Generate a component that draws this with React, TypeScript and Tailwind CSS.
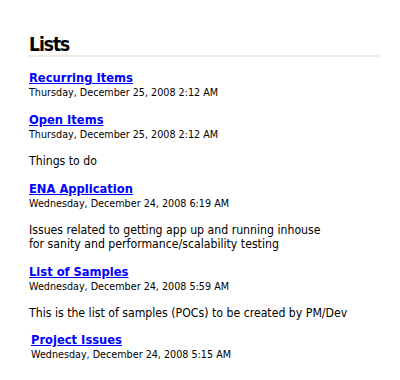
const lists = [
  { title: 'Recurring Items', date: 'Thursday, December 25, 2008 2:12 AM', desc: [] as string[] },
  { title: 'Open Items', date: 'Thursday, December 25, 2008 2:12 AM', desc: ['Things to do'] },
  {
    title: 'ENA Application',
    date: 'Wednesday, December 24, 2008 6:19 AM',
    desc: ['Issues related to getting app up and running inhouse', 'for sanity and performance/scalability testing'],
  },
  {
    title: 'List of Samples',
    date: 'Wednesday, December 24, 2008 5:59 AM',
    desc: ['This is the list of samples (POCs) to be created by PM/Dev'],
  },
  { title: 'Project Issues', date: 'Wednesday, December 24, 2008 5:15 AM', desc: [], indent: true },
];

export default function App() {
  return (
    <div className="w-[400px] h-[380px] bg-white pl-[29px] pt-[33px] text-black font-['DejaVu_Sans_Condensed','Liberation_Sans',sans-serif]">
      <h2 className="w-[350px] border-b-2 border-[#efebdf] text-[19px] font-bold leading-[22px] tracking-[-1px]">Lists</h2>
      <div className="mt-[13px] flex flex-col">
        {lists.map((item, i) => (
          <div key={i} className={item.indent ? 'pl-[2px] -mt-px' : ''}>
            <div className={i === 0 ? 'text-[12.8px] leading-[16px]' : 'mt-[13px] text-[12.8px] leading-[16px]'}>
              <a href="#" className="font-bold text-[#0000ff] underline">
                {item.title}
              </a>
            </div>
            <div className="text-[10.7px] leading-[13px]">{item.date}</div>
            {item.desc.length > 0 && (
              <div className="mt-[13px] text-[12.2px] leading-[14px]">
                {item.desc.map((d, j) => (
                  <div key={j}>{d}</div>
                ))}
              </div>
            )}
          </div>
        ))}
      </div>
    </div>
  );
}
